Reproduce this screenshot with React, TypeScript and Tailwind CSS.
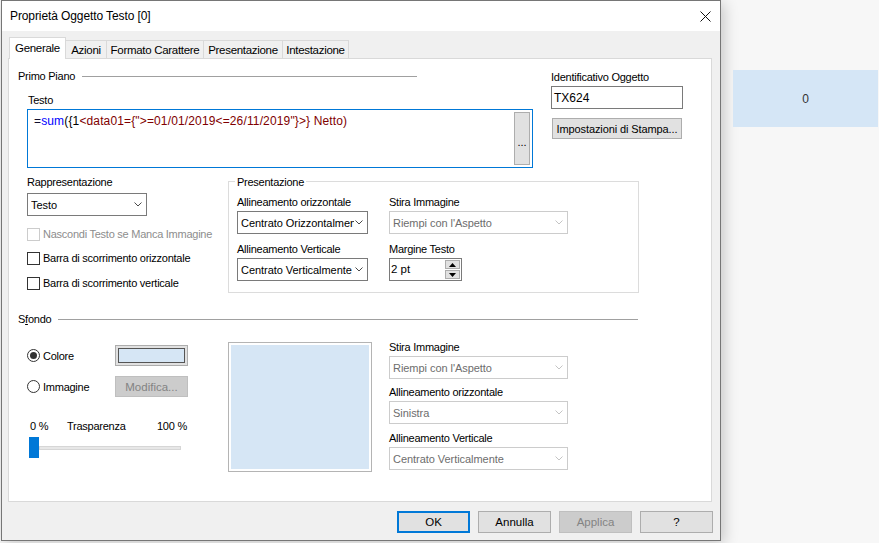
import React from "react";

type WithChildren = { children?: React.ReactNode; className?: string };

function Label({ children, className = "" }: WithChildren) {
  return (
    <div className={`whitespace-nowrap text-[11px] leading-[14px] tracking-[-0.25px] ${className}`}>
      {children}
    </div>
  );
}

function Chevron({ disabled }: { disabled?: boolean }) {
  return (
    <svg width="8" height="5" viewBox="0 0 8 5" className="shrink-0">
      <polyline
        points="0.5,0.5 4,4 7.5,0.5"
        fill="none"
        stroke={disabled ? "#c4c4c4" : "#4a4a4a"}
        strokeWidth="1"
      />
    </svg>
  );
}

function Select({
  value,
  className = "",
  disabled,
}: {
  value: string;
  className?: string;
  disabled?: boolean;
}) {
  return (
    <div
      className={`flex h-[23px] items-center gap-[1px] border bg-white pl-[3px] pr-[4px] ${
        disabled ? "border-[#cccccc] text-[#6d6d6d]" : "border-[#7a7a7a] text-black"
      } ${className}`}
    >
      <span className="flex-1 overflow-hidden whitespace-nowrap text-[11px] leading-[14px] tracking-[-0.05px]">
        {value}
      </span>
      <Chevron disabled={disabled} />
    </div>
  );
}

function Checkbox({ label, disabled }: { label: string; disabled?: boolean }) {
  return (
    <div className="flex h-[14px] items-center gap-[3px]">
      <div
        className={`h-[13px] w-[13px] shrink-0 border bg-white ${
          disabled ? "border-[#cccccc]" : "border-[#333333]"
        }`}
      />
      <Label className={disabled ? "text-[#8d8d8d]" : "text-black"}>{label}</Label>
    </div>
  );
}

function Radio({ label, checked }: { label: string; checked?: boolean }) {
  return (
    <div className="flex items-center gap-[3px]">
      <div className="flex h-[13px] w-[13px] shrink-0 items-center justify-center rounded-full border border-[#333333] bg-white">
        {checked && <div className="h-[7px] w-[7px] rounded-full bg-[#333333]" />}
      </div>
      <Label>{label}</Label>
    </div>
  );
}

function Button({
  children,
  className = "",
  disabled,
  primary,
}: WithChildren & { disabled?: boolean; primary?: boolean }) {
  let look = "border border-[#adadad] bg-[#e1e1e1] text-black";
  if (disabled) look = "border border-[#bfbfbf] bg-[#cccccc] text-[#838383]";
  if (primary) look = "border-2 border-[#0078d7] bg-[#e1e1e1] text-black";
  return (
    <div
      className={`flex items-center justify-center whitespace-nowrap leading-[14px] ${look} ${className}`}
    >
      {children}
    </div>
  );
}

function SectionHeader({ title, className = "" }: { title: React.ReactNode; className?: string }) {
  return (
    <div className={`flex h-[14px] items-center ${className}`}>
      <Label>{title}</Label>
      <div className="ml-[7px] h-px flex-1 bg-[#a0a0a0]" />
    </div>
  );
}

function SpinBox() {
  return (
    <div className="flex h-[23px] w-[73px] border border-[#7a7a7a] bg-white">
      <span className="flex-1 pl-[1px] pt-[3px] text-[11.5px] leading-[14px]">2 pt</span>
      <div className="flex w-[16px] flex-col gap-px py-px pr-px">
        <div className="flex flex-1 items-center justify-center border border-[#adadad] bg-[#e1e1e1]">
          <svg width="7" height="4" viewBox="0 0 7 4">
            <polygon points="0,4 7,4 3.5,0" fill="#000" />
          </svg>
        </div>
        <div className="flex flex-1 items-center justify-center border border-[#adadad] bg-[#e1e1e1]">
          <svg width="7" height="4" viewBox="0 0 7 4">
            <polygon points="0,0 7,0 3.5,4" fill="#000" />
          </svg>
        </div>
      </div>
    </div>
  );
}

const tabs = [
  { name: "Azioni", w: "w-[41px]" },
  { name: "Formato Carattere", w: "w-[97px]" },
  { name: "Presentazione", w: "w-[79px]" },
  { name: "Intestazione", w: "w-[66px]" },
];

export default function App() {
  return (
    <div className="flex h-[543px] w-[879px] overflow-hidden bg-[#f7f7f7] font-['Liberation_Sans',Arial,sans-serif] text-black">
      {/* finestra di dialogo */}
      <div className="ml-[1px] flex h-[541px] w-[720px] shrink-0 flex-col border border-[#767676] bg-[#f0f0f0] shadow-[3px_3px_14px_rgba(0,0,0,0.2)]">
        <div className="flex h-[30px] items-center justify-between bg-white pl-[8px] pr-[9px]">
          <span className="text-[12px] leading-[16px] tracking-[-0.1px]">Proprietà Oggetto Testo [0]</span>
          <svg width="11" height="11" viewBox="0 0 11 11">
            <path d="M0.5 0.5 L10.5 10.5 M10.5 0.5 L0.5 10.5" stroke="#111" strokeWidth="1" />
          </svg>
        </div>

        <div className="flex flex-1 flex-col pl-[6px]">
          {/* tab */}
          <div className="relative z-10 ml-[1px] mt-[6px] flex h-[21px] items-end">
            <div className="-mb-px flex h-[22px] w-[57px] items-center justify-center border border-b-0 border-[#d9d9d9] bg-white pb-[2px] text-[11.5px] leading-[14px] tracking-[-0.3px]">
              Generale
            </div>
            {tabs.map((t) => (
              <div
                key={t.name}
                className={`flex h-[18px] items-center justify-center border-r border-t border-[#d9d9d9] text-[11.5px] leading-[14px] tracking-[-0.3px] ${t.w}`}
              >
                {t.name}
              </div>
            ))}
          </div>

          {/* pannello Generale */}
          <div className="h-[444px] w-[704px] border border-[#d9d9d9] bg-white pl-[9px] pt-[10px]">
            {/* Primo Piano */}
            <div className="flex items-start">
              <div className="w-[515px]">
                <SectionHeader title="Primo Piano" className="w-[399px]" />
                <Label className="ml-[10px] mt-[10px]">Testo</Label>
                <div className="ml-[9px] mt-[2px] flex h-[59px] w-[506px] border border-[#0078d7] bg-white">
                  <div className="flex-1 whitespace-nowrap pl-[6px] pt-[4px] text-[12px] leading-[14px] tracking-[0.14px] text-[#800000]">
                    <span className="text-[#101030]">=</span>
                    <span className="text-[#0000ff]">sum</span>
                    <span className="text-black">({"{"}1</span>
                    {'<data01={">=01/01/2019<=26/11/2019"}>} Netto)'}
                  </div>
                  <div className="mr-[2px] mt-[2px] flex h-[53px] w-[16px] items-end justify-center border border-[#adadad] bg-[#e1e1e1] pb-[17px] text-[11px] leading-[10px]">
                    ...
                  </div>
                </div>
              </div>
              <div className="ml-[18px]">
                <Label className="mt-[1px]">Identificativo Oggetto</Label>
                <div className="mt-[2px] flex h-[23px] w-[132px] items-center border border-[#7a7a7a] bg-white pl-[2px] text-[12px] leading-[14px]">
                  TX624
                </div>
                <Button className="ml-[1px] mt-[9px] h-[21px] w-[130px] text-[11px] tracking-[-0.1px]">
                  Impostazioni di Stampa...
                </Button>
              </div>
            </div>

            {/* Rappresentazione + Presentazione */}
            <div className="mt-[7px] flex items-start">
              <div className="ml-[9px] w-[201px]">
                <Label>Rappresentazione</Label>
                <Select value="Testo" className="mt-[4px] w-[120px]" />
                <div className="mt-[11px]">
                  <Checkbox label="Nascondi Testo se Manca Immagine" disabled />
                </div>
                <div className="mt-[10px]">
                  <Checkbox label="Barra di scorrimento orizzontale" />
                </div>
                <div className="mt-[11px]">
                  <Checkbox label="Barra di scorrimento verticale" />
                </div>
              </div>

              <div className="mt-[6px] flex h-[112px] w-[411px] flex-col border border-[#dcdcdc]">
                <Label className="-mt-[7px] ml-[6px] self-start bg-white px-[2px]">Presentazione</Label>
                <div className="ml-[8px] mt-[6px] grid grid-cols-[131px_179px] gap-x-[21px]">
                  <div>
                    <Label>Allineamento orizzontale</Label>
                    <Select value="Centrato Orizzontalmente" className="mt-[2px]" />
                    <Label className="mt-[8px]">Allineamento Verticale</Label>
                    <Select value="Centrato Verticalmente" className="mt-[2px]" />
                  </div>
                  <div>
                    <Label>Stira Immagine</Label>
                    <Select value="Riempi con l'Aspetto" className="mt-[2px]" disabled />
                    <Label className="mt-[8px]">Margine Testo</Label>
                    <div className="mt-[2px]">
                      <SpinBox />
                    </div>
                  </div>
                </div>
              </div>
            </div>

            {/* Sfondo */}
            <SectionHeader
              title={
                <>
                  S<span className="underline">f</span>ondo
                </>
              }
              className="mt-[19px] w-[620px]"
            />
            <div className="mt-[14px] flex items-start">
              <div className="ml-[9px] w-[201px]">
                <div className="mt-[5px] flex h-[21px] items-center">
                  <div className="w-[88px]">
                    <Radio label="Colore" checked />
                  </div>
                  <Button className="h-[21px] w-[73px] p-[2px]">
                    <div className="h-full w-full border border-[#555555] bg-[#d6e6f5]" />
                  </Button>
                </div>
                <div className="mt-[10px] flex h-[21px] items-center">
                  <div className="w-[88px]">
                    <Radio label="Immagine" />
                  </div>
                  <Button className="h-[21px] w-[73px] text-[11.5px]" disabled>
                    Modifica...
                  </Button>
                </div>
                <div className="ml-[3px] mt-[22px] flex">
                  <Label className="w-[37px]">0 %</Label>
                  <Label className="w-[90px]">Trasparenza</Label>
                  <Label>100 %</Label>
                </div>
                <div className="ml-[2px] mt-[4px] flex h-[21px] items-center">
                  <div className="h-[21px] w-[10px] bg-[#0078d7]" />
                  <div className="h-[4px] w-[142px] border border-[#d6d6d6] bg-[#e7e7e7]" />
                </div>
              </div>

              <div className="mt-[2px] h-[130px] w-[144px] border border-[#b4b4b4] bg-white p-[2px]">
                <div className="h-full w-full bg-[#d6e6f5]" />
              </div>

              <div className="ml-[17px] w-[179px]">
                <Label>Stira Immagine</Label>
                <Select value="Riempi con l'Aspetto" className="mt-[2px]" disabled />
                <Label className="mt-[6px]">Allineamento orizzontale</Label>
                <Select value="Sinistra" className="mt-[2px]" disabled />
                <Label className="mt-[7px]">Allineamento Verticale</Label>
                <Select value="Centrato Verticalmente" className="mt-[2px]" disabled />
              </div>
            </div>
          </div>

          {/* pulsanti */}
          <div className="mt-[9px] flex justify-end gap-[8px] pr-[7px] text-[11.5px]">
            <Button primary className="h-[22px] w-[73px]">OK</Button>
            <Button className="h-[22px] w-[73px]">Annulla</Button>
            <Button disabled className="h-[22px] w-[73px]">Applica</Button>
            <Button className="h-[22px] w-[73px]">?</Button>
          </div>
        </div>
      </div>

      {/* oggetto testo sul foglio */}
      <div className="ml-[12px] mt-[70px] flex h-[57px] w-[145px] items-center justify-center bg-[#d5e6f6] text-[12px] text-[#333333]">
        0
      </div>
    </div>
  );
}
